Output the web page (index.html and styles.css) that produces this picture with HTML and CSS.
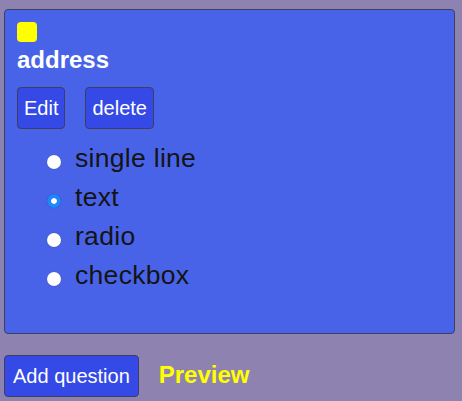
FILE: index.html
```html
<!DOCTYPE html>
<html>
<head>
<meta charset="utf-8">
<link rel="stylesheet" href="styles.css">
</head>
<body>
<div class="card">
  <div class="swatch"></div>
  <div class="title">address</div>
  <div class="actions">
    <button class="btn">Edit</button>
    <button class="btn">delete</button>
  </div>
  <ul class="options">
    <li class="option"><span class="radio"></span><span class="label">single line</span></li>
    <li class="option"><span class="radio checked"></span><span class="label">text</span></li>
    <li class="option"><span class="radio"></span><span class="label">radio</span></li>
    <li class="option"><span class="radio"></span><span class="label">checkbox</span></li>
  </ul>
</div>
<div class="footer">
  <button class="btn btn-add">Add question</button>
  <span class="preview">Preview</span>
</div>
</body>
</html>
```

FILE: styles.css
```css
html, body {
  margin: 0;
  height: 100%;
}
body {
  background: #8e83b0;
  font-family: "Liberation Sans", Arial, sans-serif;
  padding: 9px 7px 0 4px;
  box-sizing: border-box;
}
.card {
  background: #4863e8;
  border: 1px solid #3d3f5c;
  border-radius: 4px;
  padding: 12px 12px 38px 12px;
}
.swatch {
  width: 20px;
  height: 20px;
  background: #ffff00;
  border-radius: 4px;
  margin-bottom: 4px;
}
.title {
  color: #fff;
  font-weight: bold;
  font-size: 24px;
  line-height: 28px;
}
.actions {
  display: flex;
  gap: 20px;
  margin-top: 13px;
}
.btn {
  font-family: "Liberation Sans", Arial, sans-serif;
  font-size: 20px;
  line-height: 24px;
  color: #fff;
  background: #3449e6;
  border: 1px solid #3d3f5c;
  border-radius: 4px;
  padding: 8px 6px;
  margin: 0;
}
.options {
  list-style: none;
  margin: 10px 0 0 0;
  padding: 0 0 0 25px;
}
.option {
  display: flex;
  align-items: center;
  height: 39px;
  font-size: 26.5px;
  color: #141414;
}
.radio {
  width: 14px;
  height: 14px;
  border-radius: 50%;
  background: #fff;
  box-shadow: 0 0 1px rgba(0,0,0,0.4);
  margin: 6px 14px 0 5px;
  box-sizing: border-box;
  flex: none;
}
.radio.checked {
  border: 4.5px solid #1f86fb;
  background-clip: content-box;
  background-color: #fff;
}
.label {
  line-height: 39px;
  letter-spacing: 0.3px;
}
.footer {
  display: flex;
  align-items: baseline;
  gap: 20px;
  margin-top: 21px;
}
.btn-add {
  padding: 8px 8px;
}
.preview {
  color: #ffff00;
  font-weight: bold;
  font-size: 24px;
}
```
